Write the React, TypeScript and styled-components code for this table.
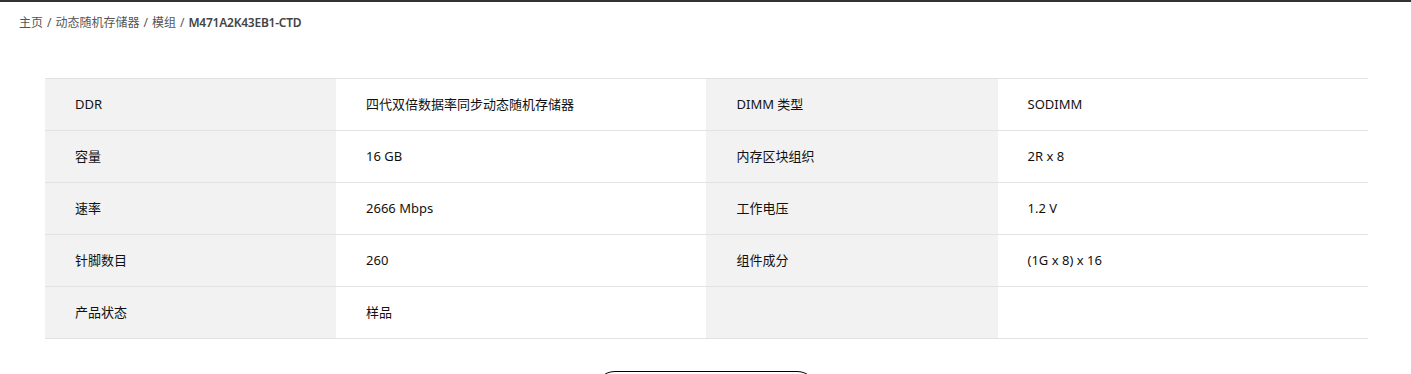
import styled, { createGlobalStyle } from 'styled-components'

const GlobalStyle = createGlobalStyle`
  html, body {
    margin: 0;
    padding: 0;
    background: #fff;
  }
  body {
    font-family: 'Noto Sans', 'Noto Sans CJK SC', sans-serif;
    color: #000;
  }
`

const Page = styled.div`
  border-top: 2px solid #333;
  min-height: 372px;
`

const Breadcrumb = styled.nav`
  display: flex;
  align-items: center;
  padding: 10px 0 0 19px;
  height: 20px;
  font-size: 12px;
  color: #555;
  > span.sep {
    margin: 0 4px 0 4px;
  }
  > strong {
    font-weight: 600;
    color: #444;
    letter-spacing: -0.02em;
  }
`

const SpecTable = styled.div`
  width: 1323px;
  margin: 46px 0 0 45px;
  display: grid;
  grid-template-columns: 22% 28% 22% 28%;
  border-top: 1px solid #e2e2e2;
`

const Cell = styled.div<{ $head?: boolean }>`
  height: 51px;
  box-sizing: border-box;
  display: flex;
  align-items: center;
  padding: 0 0 2px 30px;
  border-bottom: 1px solid #e2e2e2;
  background: ${(p) => (p.$head ? '#f2f2f2' : '#fff')};
  font-size: 13px;
  color: #111;
  height: 52px;
`

const Footer = styled.div`
  display: flex;
  justify-content: center;
  padding-top: 32px;
`

const MoreButton = styled.button`
  width: 224px;
  height: 42px;
  border: 1px solid #000;
  border-radius: 21px;
  background: #fff;
`

const rows: [string, string, string, string][] = [
  ['DDR', '四代双倍数据率同步动态随机存储器', 'DIMM 类型', 'SODIMM'],
  ['容量', '16 GB', '内存区块组织', '2R x 8'],
  ['速率', '2666 Mbps', '工作电压', '1.2 V'],
  ['针脚数目', '260', '组件成分', '(1G x 8) x 16'],
  ['产品状态', '样品', '', ''],
]

const App = () => {
  return (
    <Page>
      <GlobalStyle />
      <Breadcrumb>
        <span>主页</span>
        <span className="sep">/</span>
        <span>动态随机存储器</span>
        <span className="sep">/</span>
        <span>模组</span>
        <span className="sep">/</span>
        <strong>M471A2K43EB1-CTD</strong>
      </Breadcrumb>
      <SpecTable>
        {rows.map((r, i) => (
          <div key={i} style={{ display: 'contents' }}>
            <Cell $head>{r[0]}</Cell>
            <Cell>{r[1]}</Cell>
            <Cell $head>{r[2]}</Cell>
            <Cell>{r[3]}</Cell>
          </div>
        ))}
      </SpecTable>
      <Footer>
        <MoreButton aria-label="查看更多" />
      </Footer>
    </Page>
  )
}

export default App
